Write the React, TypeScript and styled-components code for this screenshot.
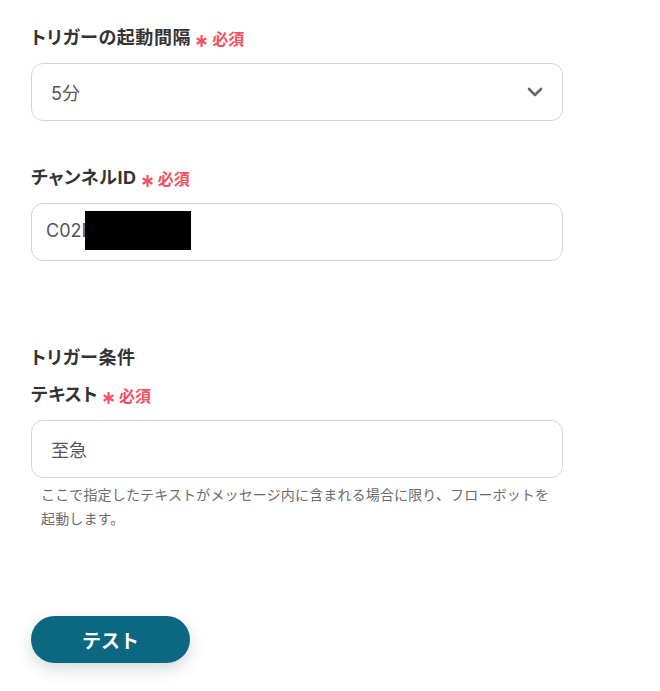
import styled, { createGlobalStyle } from "styled-components";

const GlobalStyle = createGlobalStyle`
  html, body {
    margin: 0;
    padding: 0;
    background: #ffffff;
  }
  body {
    font-family: "Noto Sans CJK JP", "Noto Sans", sans-serif;
    color: #333;
  }
`;

const Page = styled.div`
  display: flex;
  flex-direction: column;
  padding: 26px 0 28px 31px;
  width: 532px;
`;

interface FieldProps {
  $gap?: number;
}

const Field = styled.div<FieldProps>`
  display: flex;
  flex-direction: column;
  margin-top: ${(p) => p.$gap ?? 0}px;
`;

const Label = styled.div`
  display: flex;
  align-items: center;
  height: 24px;
  font-family: "Inter", "Noto Sans CJK JP", sans-serif;
  font-size: 18px;
  font-weight: 700;
  font-feature-settings: "palt";
  letter-spacing: 0.6px;
  color: #333;
  line-height: 24px;
  margin-bottom: 13px;
`;

const SectionTitle = styled.div`
  height: 24px;
  line-height: 24px;
  font-size: 18px;
  font-weight: 700;
  font-feature-settings: "palt";
  letter-spacing: 0.6px;
  color: #333;
  margin-top: 83px;
  margin-bottom: 15px;
`;

const Required = styled.span`
  display: inline-flex;
  align-items: center;
  margin-left: 5px;
  color: #f5505f;
  font-family: "Noto Sans CJK JP", sans-serif;
  font-size: 16px;
  font-weight: 700;
  font-feature-settings: normal;
  letter-spacing: 0;
  gap: 5px;
`;

const Star = styled.svg`
  width: 11px;
  height: 12px;
  margin-top: 5px;
`;

interface BoxProps {
  $pad?: number;
}

const Box = styled.div<BoxProps>`
  box-sizing: border-box;
  display: flex;
  align-items: center;
  justify-content: space-between;
  height: 58px;
  padding: 0 19px 0 ${(p) => p.$pad ?? 19}px;
  border: 1px solid #d3d5dc;
  border-radius: 12px;
  font-family: "Inter", "Noto Sans CJK JP", sans-serif;
  font-size: 18px;
  color: #555;
  overflow: hidden;
`;

const IdValue = styled.div`
  display: flex;
  align-items: center;
  margin-top: -4px;
`;

const Redacted = styled.span`
  display: inline-block;
  width: 106px;
  height: 39px;
  background: #000;
  margin-left: -9px;
`;

const Help = styled.p`
  margin: 4px 0 0;
  padding: 0 10px;
  font-size: 14px;
  line-height: 24px;
  color: #6b6b6b;
  letter-spacing: 0.15px;
`;

const TestButton = styled.button`
  align-self: flex-start;
  margin-top: 86px;
  width: 159px;
  height: 47px;
  border: none;
  border-radius: 24px;
  background: #0b6880;
  color: #fff;
  font-family: "Noto Sans CJK JP", "Noto Sans", sans-serif;
  font-size: 19px;
  font-weight: 700;
  box-shadow: 0 6px 16px rgba(30, 50, 70, 0.18);
  cursor: pointer;
`;

function RequiredMark() {
  return (
    <Required>
      <Star viewBox="0 0 11 12">
        <g stroke="#f5505f" strokeWidth="2.2">
          <line x1="5.5" y1="0" x2="5.5" y2="12" />
          <line x1="0.6" y1="3.2" x2="10.4" y2="8.8" />
          <line x1="0.6" y1="8.8" x2="10.4" y2="3.2" />
        </g>
      </Star>
      必須
    </Required>
  );
}

function Chevron() {
  return (
    <svg width="16" height="10" viewBox="0 0 16 10">
      <path d="M2 2 L8 8 L14 2" fill="none" stroke="#666" strokeWidth="2.6" strokeLinecap="round" strokeLinejoin="round" />
    </svg>
  );
}

export default function App() {
  return (
    <>
      <GlobalStyle />
      <Page>
        <Field>
          <Label>
            トリガーの起動間隔
            <RequiredMark />
          </Label>
          <Box>
            <span>5分</span>
            <Chevron />
          </Box>
        </Field>

        <Field $gap={45}>
          <Label>
            チャンネルID
            <RequiredMark />
          </Label>
          <Box $pad={14}>
            <IdValue>
              <span>C02D</span>
              <Redacted />
            </IdValue>
          </Box>
        </Field>

        <SectionTitle>トリガー条件</SectionTitle>

        <Field>
          <Label>
            テキスト
            <RequiredMark />
          </Label>
          <Box>
            <span>至急</span>
          </Box>
          <Help>ここで指定したテキストがメッセージ内に含まれる場合に限り、フローボットを起動します。</Help>
        </Field>

        <TestButton>テスト</TestButton>
      </Page>
    </>
  );
}
